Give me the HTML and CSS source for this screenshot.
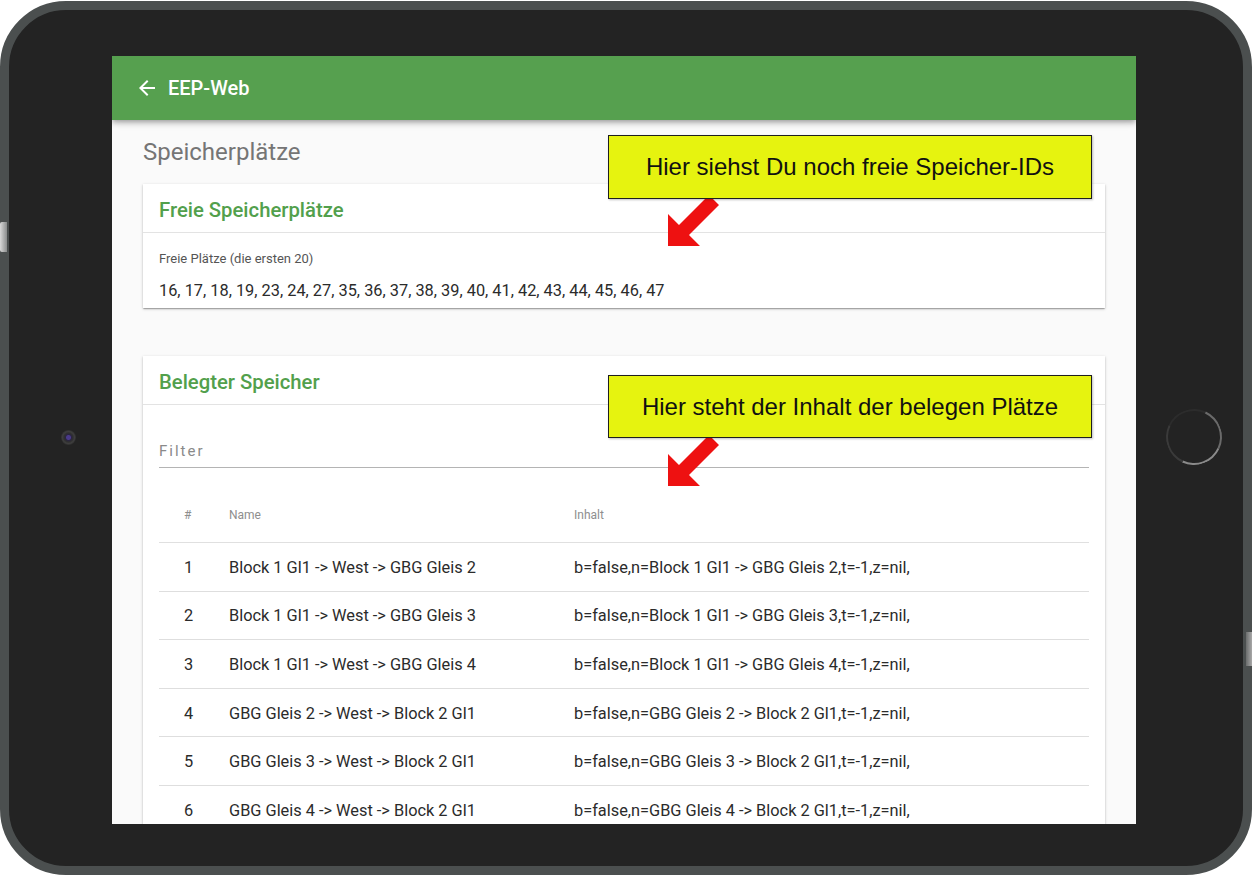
FILE: index.html
```html
<!DOCTYPE html>
<html lang="de">
<head>
<meta charset="utf-8">
<title>EEP-Web – Speicherplätze</title>
<link rel="stylesheet" href="styles.css">
</head>
<body>
<div class="tablet">
  <span class="side-btn side-btn-left"></span>
  <span class="side-btn side-btn-right"></span>
  <div class="bezel-left"><span class="camera"></span></div>
  <div class="screen">
    <header class="appbar">
      <svg class="back-icon" viewBox="0 0 24 24" width="24" height="24"><path fill="#fff" d="M20 11H7.830l5.59-5.590L12 4l-8 8 8 8 1.41-1.41L7.83 13H20v-2z"/></svg>
      <span class="appbar-title">EEP-Web</span>
    </header>
    <main class="content">
      <h1 class="page-title">Speicherplätze</h1>
      <section class="card card-free">
        <h2 class="card-title">Freie Speicherplätze</h2>
        <div class="card-body">
          <div class="field-label">Freie Plätze (die ersten 20)</div>
          <div class="field-value">16, 17, 18, 19, 23, 24, 27, 35, 36, 37, 38, 39, 40, 41, 42, 43, 44, 45, 46, 47</div>
        </div>
      </section>
      <section class="card card-used">
        <h2 class="card-title">Belegter Speicher</h2>
        <div class="card-body">
          <div class="filter"><span class="filter-label">Filter</span></div>
          <table class="mem-table">
            <colgroup><col class="c-num"><col class="c-name"><col class="c-val"></colgroup>
            <thead>
              <tr><th>#</th><th>Name</th><th>Inhalt</th></tr>
            </thead>
            <tbody>
              <tr><td>1</td><td>Block 1 Gl1 -&gt; West -&gt; GBG Gleis 2</td><td>b=false,n=Block 1 Gl1 -&gt; GBG Gleis 2,t=-1,z=nil,</td></tr>
              <tr><td>2</td><td>Block 1 Gl1 -&gt; West -&gt; GBG Gleis 3</td><td>b=false,n=Block 1 Gl1 -&gt; GBG Gleis 3,t=-1,z=nil,</td></tr>
              <tr><td>3</td><td>Block 1 Gl1 -&gt; West -&gt; GBG Gleis 4</td><td>b=false,n=Block 1 Gl1 -&gt; GBG Gleis 4,t=-1,z=nil,</td></tr>
              <tr><td>4</td><td>GBG Gleis 2 -&gt; West -&gt; Block 2 Gl1</td><td>b=false,n=GBG Gleis 2 -&gt; Block 2 Gl1,t=-1,z=nil,</td></tr>
              <tr><td>5</td><td>GBG Gleis 3 -&gt; West -&gt; Block 2 Gl1</td><td>b=false,n=GBG Gleis 3 -&gt; Block 2 Gl1,t=-1,z=nil,</td></tr>
              <tr><td>6</td><td>GBG Gleis 4 -&gt; West -&gt; Block 2 Gl1</td><td>b=false,n=GBG Gleis 4 -&gt; Block 2 Gl1,t=-1,z=nil,</td></tr>
            </tbody>
          </table>
        </div>
      </section>
    </main>
  </div>
  <div class="bezel-right"><span class="home-btn"></span></div>

  <svg class="arrow arrow-1" viewBox="0 0 70 70" width="70" height="70"><polygon fill="#ee1111" points="8,56 8,24 19,35 49,5 59,15 29,45 40,56"/></svg>
  <div class="callout callout-1">Hier siehst Du noch freie Speicher-IDs</div>
  <svg class="arrow arrow-2" viewBox="0 0 70 70" width="70" height="70"><polygon fill="#ee1111" points="8,56 8,24 19,35 49,5 59,15 29,45 40,56"/></svg>
  <div class="callout callout-2">Hier steht der Inhalt der belegen Plätze</div>
</div>
</body>
</html>
```
FILE: styles.css
```css
* { box-sizing: border-box; }
html, body { margin: 0; padding: 0; background: #ffffff; }
body { width: 1252px; height: 876px; overflow: hidden; }

.tablet {
  position: relative;
  margin-top: 1px;
  width: 1252px;
  height: 874px;
  border: 9px solid #4b4f4f;
  border-radius: 66px;
  background: #232323;
  display: flex;
  align-items: flex-start;
  padding-top: 46px;
}

.side-btn { position: absolute; background: linear-gradient(90deg, #d8d8d8, #8a8c8c); }
.side-btn-left { left: -9px; top: 212px; width: 7px; height: 30px; border-radius: 2px 0 0 2px; }
.side-btn-right { right: -9px; top: 622px; width: 6px; height: 34px; background: linear-gradient(90deg, #6a6c6c, #a8a8a8); }

.bezel-left {
  width: 103px;
  height: 768px;
  display: flex;
  align-items: center;
  padding-left: 52px;
  padding-bottom: 6px;
}
.camera {
  width: 15px; height: 15px; border-radius: 50%;
  background: radial-gradient(circle, #4a3a8a 0 2px, #2a2540 3px, #303030 4.5px, #3e3e3e 6px, #2e2e2e 7.5px);
}
.bezel-right {
  width: 107px;
  height: 768px;
  display: flex;
  align-items: center;
  padding-left: 30px;
  padding-bottom: 6px;
}
.home-btn {
  width: 56px; height: 56px; border-radius: 50%;
  border: 2px solid;
  border-color: #2c2c2c #6a6a6a #8a8a8a #3a3a3a;
  transform: rotate(-20deg);
}

.screen {
  width: 1024px;
  height: 768px;
  background: #fafafa;
  overflow: hidden;
  display: flex;
  flex-direction: column;
  font-family: Roboto, "Liberation Sans", sans-serif;
}

.appbar {
  flex: none;
  height: 64px;
  background: #56a04f;
  display: flex;
  align-items: center;
  padding-left: 23px;
  box-shadow: 0 2px 4px -1px rgba(0,0,0,.2), 0 4px 5px 0 rgba(0,0,0,.14), 0 1px 10px 0 rgba(0,0,0,.12);
  position: relative;
  z-index: 1;
}
.back-icon { display: block; margin-right: 9px; }
.appbar-title { color: #fff; font-size: 20px; font-weight: 500; line-height: 24px; }

.content { padding: 0 31px; }
.page-title {
  margin: 0;
  padding-top: 18px;
  margin-bottom: 17px;
  font-size: 24px;
  line-height: 29px;
  font-weight: 400;
  color: #757575;
}

.card {
  background: #fff;
  box-shadow: 0 1px 3px 0 rgba(0,0,0,.2), 0 1px 1px 0 rgba(0,0,0,.14), 0 2px 1px -1px rgba(0,0,0,.12);
}
.card-used { margin-top: 48px; }
.card-title {
  margin: 0;
  padding: 14px 16px 10px;
  line-height: 24px;
  font-size: 20.3px;
  font-weight: 500;
  color: #52a04c;
  border-bottom: 1px solid #e3e3e3;
}
.card-body { padding: 0 16px; }
.card-free .card-body { padding-top: 18px; padding-bottom: 8px; }

.field-label { font-size: 13px; line-height: 16px; color: #555; margin-bottom: 14px; }
.field-value { font-size: 16.35px; line-height: 20px; color: #2b2b2b; margin-bottom: -1px; }

.filter {
  padding-top: 36px;
  padding-bottom: 6px;
  border-bottom: 1px solid #b4b4b4;
}
.filter-label { display: block; font-size: 15px; line-height: 20px; letter-spacing: 2px; color: #8a8a8a; }

.mem-table { width: 100%; border-collapse: collapse; table-layout: fixed; }
.c-num { width: 70px; }
.c-name { width: 345px; }
.mem-table th {
  text-align: left;
  font-size: 12px;
  font-weight: 400;
  line-height: 16px;
  color: #8e8e8e;
  padding: 39px 0 19px;
  border-bottom: 1px solid #e0e0e0;
  vertical-align: bottom;
}
.mem-table td {
  font-size: 16.35px;
  line-height: 20px;
  color: #2b2b2b;
  height: 48.6px;
  padding: 2px 0 0;
  vertical-align: middle;
  border-bottom: 1px solid #dedede;
  white-space: nowrap;
}
.mem-table th:first-child, .mem-table td:first-child { padding-left: 25px; }

.arrow { position: absolute; display: block; }
.arrow-1 { left: 651px; top: 180px; }
.arrow-2 { left: 651px; top: 420px; }

.callout {
  position: absolute;
  left: 599px;
  width: 484px;
  height: 64px;
  background: #e6f30f;
  border: 1.5px solid #1e1e1e;
  font-family: "Liberation Sans", Arial, sans-serif;
  font-size: 24px;
  color: #111;
  display: flex;
  align-items: center;
  justify-content: center;
  box-shadow: 1px 1px 2px rgba(0,0,0,.25);
}
.callout-1 { top: 125px; }
.callout-2 { top: 365px; height: 63px; }
```
